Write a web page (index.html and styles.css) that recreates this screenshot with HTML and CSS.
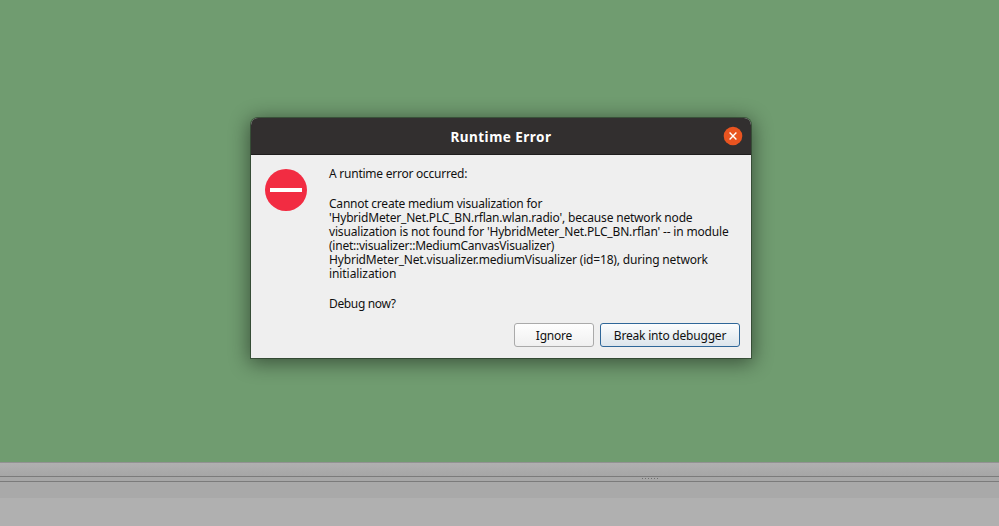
FILE: index.html
```html
<!DOCTYPE html>
<html lang="en">
<head>
<meta charset="utf-8">
<title>Runtime Error</title>
<link rel="stylesheet" href="styles.css">
</head>
<body>
<main class="canvas">
  <section class="dialog" role="alertdialog">
    <header class="titlebar">
      <h1 class="title">Runtime Error</h1>
      <svg class="close" viewBox="0 0 20 20"><circle cx="10" cy="10" r="9.3"/><path d="M6.6 6.6l6.8 6.8M13.4 6.6l-6.8 6.8"/></svg>
    </header>
    <div class="content">
      <svg class="icon" viewBox="0 0 42 42"><circle cx="21" cy="21" r="21"/><rect x="5" y="19" width="32" height="4"/></svg>
      <div class="message">
        <p><span class="l1">A runtime error occurred:</span></p>
        <p><span class="l2">Cannot create medium visualization for</span>
        <span class="l3">'HybridMeter_Net.PLC_BN.rflan.wlan.radio', because network node</span>
        <span class="l4">visualization is not found for 'HybridMeter_Net.PLC_BN.rflan' -- in module</span>
        <span class="l5">(inet::visualizer::MediumCanvasVisualizer)</span>
        <span class="l6">HybridMeter_Net.visualizer.mediumVisualizer (id=18), during network</span>
        <span class="l7">initialization</span></p>
        <p><span class="l8">Debug now?</span></p>
      </div>
    </div>
    <footer class="buttons">
      <button class="ignore">Ignore</button>
      <button class="debug">Break into debugger</button>
    </footer>
  </section>
</main>
<div class="toolbar"></div>
<div class="splitter"><svg viewBox="0 0 16 1"><path d="M0 .5h16"/></svg></div>
<div class="header"></div>
<div class="pane"></div>
</body>
</html>
```
FILE: styles.css
```css
* { box-sizing: border-box; }
body { margin: 0; height: 526px; overflow: hidden; display: flex; flex-direction: column; background: #b0b0b0; font-family: "Noto Sans", "Open Sans", sans-serif; color: #111; }
.canvas { height: 462px; padding: 118px 0 0 251px; background: #709c70; }
.dialog { width: 500px; height: 240px; background: #efefef; border-radius: 7px 7px 0 0; display: flex; flex-direction: column; box-shadow: 0 0 0 1px rgba(25,40,25,.5), 0 3px 20px 2px rgba(0,0,0,.48); }
.titlebar { height: 37px; background: #322f2f; border-bottom: 1px solid #1f1d1d; border-radius: 7px 7px 0 0; display: grid; grid-template-columns: 36px 1fr 36px; align-items: center; }
.title { grid-column: 2; margin: 1px 0 0; text-align: center; color: #fff; font-size: 13.5px; line-height: 18px; letter-spacing: .48px; }
.close { width: 20px; height: 20px; margin: 0 0 1px 8px; }
.close circle { fill: #e95420; }
.close path { stroke: #fff; stroke-width: 1.4; fill: none; }
.content { display: flex; gap: 22px; padding: 11px 14px 0; height: 168px; }
.icon { width: 42px; height: 42px; margin-top: 3px; flex: none; }
.icon circle { fill: #f22c42; }
.icon rect { fill: #fff; }
.message { padding-top: 1px; font-size: 12px; line-height: 14px; white-space: nowrap; }
.message p { margin: 0 0 16px; }
.message span { display: block; width: max-content; }
.l1 { letter-spacing: -.24px; }
.l2 { letter-spacing: -.22px; }
.l3 { letter-spacing: -.185px; }
.l4 { letter-spacing: -.17px; }
.l5 { letter-spacing: -.24px; }
.l6 { letter-spacing: -.17px; }
.l7 { letter-spacing: -.08px; }
.l8 { letter-spacing: -.35px; }
.buttons { display: flex; justify-content: flex-end; gap: 6px; padding-right: 11px; }
button { height: 24px; padding: 2px 0 0; font: 12px/20px "Noto Sans", sans-serif; letter-spacing: -.2px; color: #111; border: 1px solid #aaa; border-radius: 3px; background: linear-gradient(#fefefe, #f0f0f0); }
.ignore { width: 80px; }
.debug { width: 140px; border-color: #2f6799; background: linear-gradient(#fcfdfe, #dce5ec); }
.toolbar { height: 14px; border-top: 1px solid #929292; background: linear-gradient(#b0b0b0, #a6a6a6); }
.splitter { height: 6px; border-top: 1px solid #7b7b7b; border-bottom: 1px solid #7b7b7b; background: #a7a7a7; padding: 1px 0 0 642px; }
.splitter svg { display: block; width: 16px; height: 1px; }
.splitter path { stroke: #707070; stroke-dasharray: 1 2; }
.header { height: 16px; background: #a9a9a9; }
.pane { flex: 1; background: #b0b0b0; }
```
